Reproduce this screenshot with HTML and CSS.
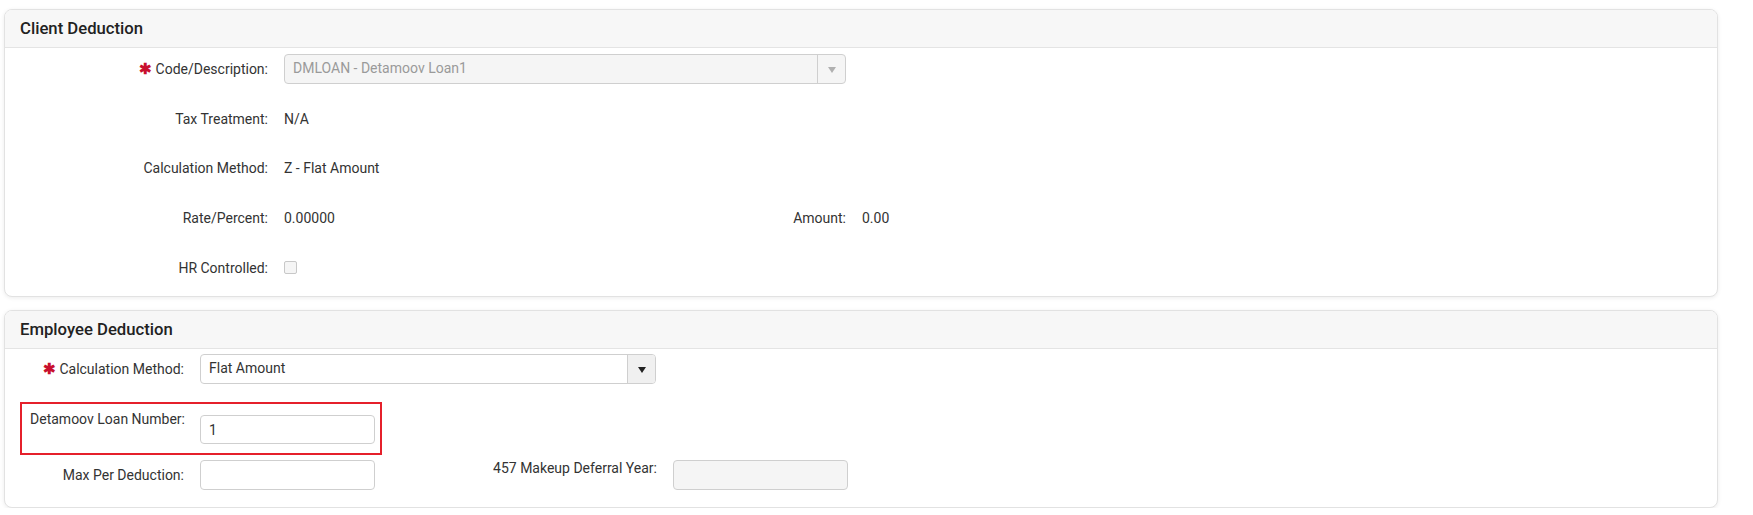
FILE: index.html
```html
<!DOCTYPE html>
<html lang="en">
<head>
<meta charset="utf-8">
<title>Deduction</title>
<link rel="stylesheet" href="styles.css">
</head>
<body>
<section class="panel panel-client">
  <header class="panel-head">Client Deduction</header>
  <div class="panel-body grid-client">
    <div class="lbl"><span class="req">✱</span> Code/Description:</div>
    <div class="val span2">
      <div class="select disabled">
        <span class="select-text">DMLOAN - Detamoov Loan1</span>
        <span class="select-btn"><span class="tri"></span></span>
      </div>
    </div>
    <div></div>

    <div class="lbl">Tax Treatment:</div>
    <div class="val">N/A</div>
    <div></div><div></div>

    <div class="lbl">Calculation Method:</div>
    <div class="val">Z - Flat Amount</div>
    <div></div><div></div>

    <div class="lbl">Rate/Percent:</div>
    <div class="val">0.00000</div>
    <div class="lbl">Amount:</div>
    <div class="val">0.00</div>

    <div class="lbl">HR Controlled:</div>
    <div class="val"><span class="checkbox"></span></div>
    <div></div><div></div>
  </div>
</section>

<section class="panel panel-emp">
  <header class="panel-head">Employee Deduction</header>
  <div class="panel-body emp-body">
    <div class="row row-calc">
      <div class="lbl lbl-emp"><span class="req">✱</span> Calculation Method:</div>
      <div class="select wide">
        <span class="select-text dark">Flat Amount</span>
        <span class="select-btn btn-grey"><span class="tri dark"></span></span>
      </div>
    </div>
    <div class="row row-loan">
      <div class="lbl lbl-loan">Detamoov Loan Number:</div>
      <div class="input loan-input">1</div>
    </div>
    <div class="row row-max">
      <div class="lbl lbl-emp">Max Per Deduction:</div>
      <div class="input"></div>
      <div class="lbl lbl-457">457 Makeup Deferral Year:</div>
      <div class="input disabled-input"></div>
    </div>
  </div>
</section>
</body>
</html>
```

FILE: styles.css
```css
* { box-sizing: border-box; }
html, body { margin: 0; padding: 0; background: #fff; }
body {
  font-family: Roboto, "Noto Sans", "Liberation Sans", sans-serif;
  font-size: 14px;
  color: #333;
  padding: 9px 0 0 4px;
  width: 1722px;
}
.panel {
  width: 1714px;
  border: 1px solid #e2e2e2;
  border-radius: 8px;
  background: #fff;
  box-shadow: 0 1px 4px rgba(0,0,0,0.08);
  overflow: hidden;
}
.panel-client { height: 288px; }
.panel-emp { height: 198px; margin-top: 13px; }
.panel-head {
  height: 38px;
  background: #f7f7f7;
  border-bottom: 1px solid #e4e4e4;
  padding: 0 0 0 15px;
  line-height: 37px;
  font-size: 16.7px;
  font-weight: 500;
  color: #222;
}
.grid-client {
  display: grid;
  grid-template-columns: 263px 446px 100px 1fr;
  column-gap: 16px;
  row-gap: 19.7px;
  grid-auto-rows: 30px;
  padding-top: 6px;
  align-items: center;
}
.lbl { text-align: right; white-space: nowrap; line-height: 16px; }
.val { white-space: nowrap; }
.span2 { grid-column: 2 / 4; }
.req { color: #c8102e; font-size: 15px; font-weight: 700; }
.select {
  display: flex;
  height: 30px;
  border: 1px solid #cfcfcf;
  border-radius: 4px;
  background: #fff;
  overflow: hidden;
}
.select.disabled { background: #f5f5f5; }
.select-text { flex: 1; padding-left: 8px; line-height: 27px; color: #333; }
.select.disabled .select-text { color: #9a9a9a; }
.select-btn {
  width: 28px;
  border-left: 1px solid #cfcfcf;
  display: flex;
  align-items: center;
  justify-content: center;
}
.btn-grey { background: #f0f0f0; }
.tri {
  width: 0; height: 0;
  border-left: 4px solid transparent;
  border-right: 4px solid transparent;
  border-top: 6px solid #b0b0b0;
  margin-top: 1px;
}
.tri.dark { border-top-color: #222; }
.checkbox {
  display: block;
  width: 13px; height: 13px;
  border: 1px solid #c8c8c8;
  border-radius: 2px;
  background: #f5f5f5;
}

.emp-body { padding-top: 5px; }
.row { display: flex; }
.row-calc { align-items: center; height: 30px; }
.lbl-emp { width: 179px; margin-right: 16px; }
.select.wide { width: 456px; }
.row-loan {
  margin: 18px 0 0 15px;
  width: 362px;
  height: 53px;
  border: 2px solid #e5202b;
  padding: 7px 0 0 0;
  align-items: flex-start;
}
.lbl-loan { width: 163px; margin-right: 15px; }
.input {
  width: 175px;
  height: 30px;
  border: 1px solid #cfcfcf;
  border-radius: 4px;
  background: #fff;
  padding-left: 8px;
  line-height: 28px;
  color: #333;
}
.loan-input { margin-top: 4px; height: 29px; }
.row-max { margin-top: 5px; align-items: center; height: 30px; }
.lbl-457 { width: 282px; margin-right: 16px; align-self: flex-start; }
.disabled-input { background: #f5f5f5; }
```
